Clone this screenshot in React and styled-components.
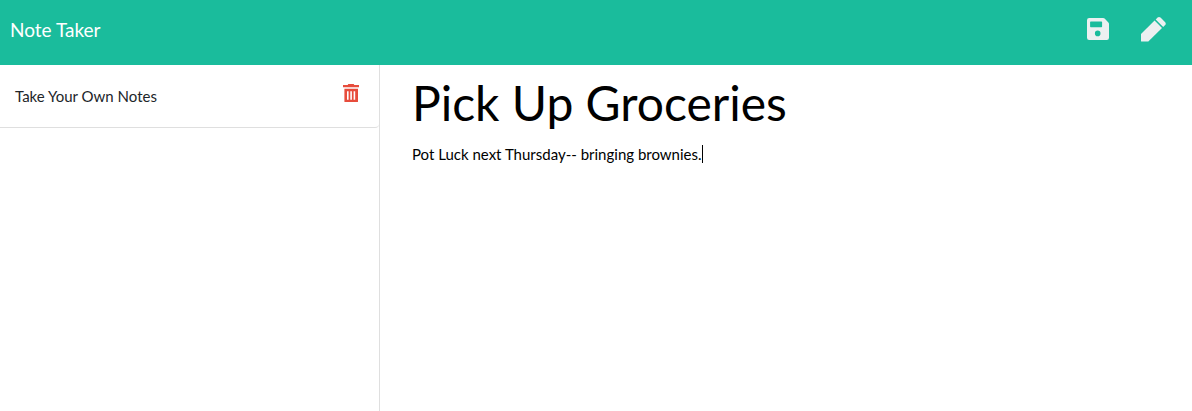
import React, { useState } from "react";
import styled, { createGlobalStyle } from "styled-components";

const GlobalStyle = createGlobalStyle`
  *, *::before, *::after { box-sizing: border-box; }
  html, body, #root { height: 100%; }
  body {
    margin: 0;
    background: #fff;
    color: #212529;
    font: 400 15px/22px Lato, "Liberation Sans", sans-serif;
  }
`;

const Page = styled.div`
  display: flex;
  flex-direction: column;
  min-height: 100%;
`;

const Navbar = styled.header`
  display: flex;
  align-items: center;
  justify-content: space-between;
  padding: 15px 24px 21px 10px;
  background: #1abc9c;
`;

const Brand = styled.a`
  color: #fff;
  font-size: 19px;
  line-height: 29px;
  text-decoration: none;
`;

const Actions = styled.div`
  display: flex;
  align-items: center;
  gap: 28px;
`;

const IconButton = styled.button`
  display: flex;
  padding: 0 2px;
  border: 0;
  background: none;
  color: ${(p) => (p.$danger ? "#e74c3c" : "#ecf0f1")};
  cursor: pointer;
`;

const Columns = styled.div`
  display: grid;
  grid-template-columns: minmax(200px, 380fr) 812fr;
  flex: 1;
`;

const Sidebar = styled.nav`
  border-right: 1px solid #dfdfdf;
`;

const NoteList = styled.ul`
  margin: 0;
  padding: 0;
  list-style: none;
`;

const NoteItem = styled.li`
  display: flex;
  align-items: flex-start;
  justify-content: space-between;
  padding: 19px 18px 19px 15px;
  border-bottom: 1px solid #dfdfdf;
  border-radius: 0 0 4px 0;
`;

const NoteLink = styled.a`
  color: inherit;
  line-height: 24px;
  text-decoration: none;
`;

const Editor = styled.main`
  display: flex;
  flex-direction: column;
  gap: 10px;
  padding: 8px 32px;
`;

const TitleInput = styled.input`
  width: 100%;
  height: 60px;
  padding: 0;
  border: 0;
  outline: 0;
  background: none;
  color: #000;
  font: 400 48px/60px Lato, "Liberation Sans", sans-serif;
`;

const Body = styled.div`
  display: flex;
  align-items: flex-start;
`;

const BodyInput = styled.textarea`
  field-sizing: content;
  max-width: 100%;
  padding: 0;
  border: 0;
  outline: 0;
  resize: none;
  overflow: hidden;
  background: none;
  color: #000;
  caret-color: transparent;
  font: inherit;
`;

const Caret = styled.span`
  width: 1px;
  height: 18px;
  margin-top: 2px;
  background: #000;
`;

const SaveIcon = () => (
  <svg width="22" height="24" viewBox="0 0 22 24" fill="currentColor" aria-hidden="true">
    <path
      fillRule="evenodd"
      d="M2.2 0H16.2Q17 0 17.6.6L21.4 4.4Q22 5 22 5.8V19.8Q22 22 19.8 22H2.2Q0 22 0 19.8V2.2Q0 0 2.2 0ZM3.8 3.6Q3.1 3.6 3.1 4.3V8.6Q3.1 9.3 3.8 9.3H14.4Q15.1 9.3 15.1 8.6V4.3Q15.1 3.6 14.4 3.6ZM10.7 12.6a2.8 2.8 0 1 0 0 5.6a2.8 2.8 0 1 0 0-5.6Z"
    />
  </svg>
);

const PencilIcon = () => (
  <svg width="25" height="25" viewBox="0 0 25 25" fill="currentColor" aria-hidden="true">
    <path d="M13.6 3.6 21 11 7.3 24.4H.5Q0 24.4 0 23.9V17.1Z" />
    <path d="M14.7 2.5 16.6.6Q18 -.5 19.5.6L24.2 5.3Q25.3 6.9 24.2 8.1L22.2 10Z" />
  </svg>
);

const TrashIcon = () => (
  <svg width="16" height="18" viewBox="0 0 16 18" fill="currentColor" aria-hidden="true">
    <path d="M5.3 0H10.7L11.3 1H16V3.3H0V1H4.7Z" />
    <path
      fillRule="evenodd"
      d="M1.4 4.7H15V17.4Q15 18 14.4 18H2Q1.4 18 1.4 17.4ZM4 7.3V15.8H5.6V7.3ZM7.3 7.3V15.8H8.9V7.3ZM10.6 7.3V15.8H12.2V7.3Z"
    />
  </svg>
);

export default function App() {
  const [title, setTitle] = useState("Pick Up Groceries");
  const [text, setText] = useState("Pot Luck next Thursday-- bringing brownies.");

  return (
    <Page>
      <GlobalStyle />
      <Navbar>
        <Brand href="/">Note Taker</Brand>
        <Actions>
          <IconButton type="button" aria-label="Save note">
            <SaveIcon />
          </IconButton>
          <IconButton type="button" aria-label="New note">
            <PencilIcon />
          </IconButton>
        </Actions>
      </Navbar>
      <Columns>
        <Sidebar aria-label="Notes">
          <NoteList>
            <NoteItem>
              <NoteLink href="#note">Take Your Own Notes</NoteLink>
              <IconButton type="button" $danger aria-label="Delete note">
                <TrashIcon />
              </IconButton>
            </NoteItem>
          </NoteList>
        </Sidebar>
        <Editor>
          <TitleInput
            aria-label="Note title"
            value={title}
            onChange={(e) => setTitle(e.target.value)}
          />
          <Body>
            <BodyInput
              aria-label="Note text"
              rows={1}
              value={text}
              onChange={(e) => setText(e.target.value)}
            />
            <Caret aria-hidden="true" />
          </Body>
        </Editor>
      </Columns>
    </Page>
  );
}
